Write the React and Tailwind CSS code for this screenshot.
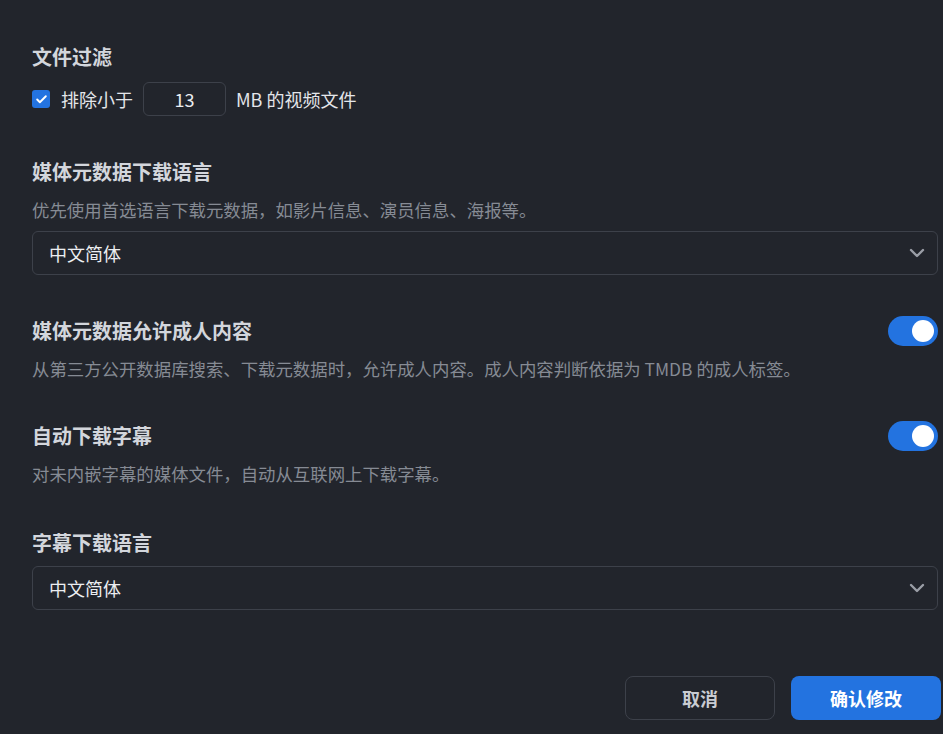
import { ChevronDown, Check } from "lucide-react";

function Toggle({ on }) {
  return (
    <div
      className={`flex h-[30px] w-[50px] shrink-0 items-center rounded-full px-[4px] ${
        on ? "justify-end bg-[#2373e0]" : "justify-start bg-[#3b3f48]"
      }`}
    >
      <div className="h-[22px] w-[22px] rounded-full bg-white" />
    </div>
  );
}

function Select({ value }) {
  return (
    <div className="flex h-[44px] items-center justify-between rounded-md border border-[#3d414a] pl-4 pr-[8px] text-[18px] text-[#eceef1]">
      <span>{value}</span>
      <ChevronDown className="h-6 w-6 text-[#9a9ea6]" strokeWidth={2.4} />
    </div>
  );
}

export default function App() {
  return (
    <div
      className="min-h-[734px] w-full bg-[#22252c] pl-8 pr-[5px] pt-[43px]"
      style={{ fontFamily: '"Noto Sans CJK SC", "Noto Sans", sans-serif' }}
    >
      {/* 文件过滤 */}
      <h3 className="text-[20px] font-bold leading-7 text-[#d3d6dc]">文件过滤</h3>
      <div className="mt-[11px] flex h-[34px] items-center text-[18px] text-[#e4e6ea]">
        <span className="flex h-[18px] w-[18px] items-center justify-center rounded-[3px] bg-[#2373e0]">
          <Check className="h-[13px] w-[13px] text-white" strokeWidth={3.5} />
        </span>
        <span className="ml-[11px]">排除小于</span>
        <div className="ml-[10px] flex h-[34px] w-[83px] items-center justify-center rounded-md border border-[#3d414a] text-[#eceef1]">
          13
        </div>
        <span className="ml-[10px]">MB 的视频文件</span>
      </div>

      {/* 媒体元数据下载语言 */}
      <h3 className="mt-[42px] text-[20px] font-bold leading-7 text-[#d3d6dc]">媒体元数据下载语言</h3>
      <p className="mt-[12px] text-[17.4px] leading-6 text-[#868b94]">
        优先使用首选语言下载元数据，如影片信息、演员信息、海报等。
      </p>
      <div className="mt-[9px]">
        <Select value="中文简体" />
      </div>

      {/* 成人内容 */}
      <div className="mt-[41px] flex h-[30px] items-center justify-between">
        <h3 className="text-[20px] font-bold leading-7 text-[#d3d6dc]">媒体元数据允许成人内容</h3>
        <Toggle on />
      </div>
      <p className="mt-[11px] text-[17.4px] leading-6 text-[#868b94]">
        从第三方公开数据库搜索、下载元数据时，允许成人内容。成人内容判断依据为 TMDB 的成人标签。
      </p>

      {/* 自动下载字幕 */}
      <div className="mt-[40px] flex h-[30px] items-center justify-between">
        <h3 className="text-[20px] font-bold leading-7 text-[#d3d6dc]">自动下载字幕</h3>
        <Toggle on />
      </div>
      <p className="mt-[11px] text-[17.4px] leading-6 text-[#868b94]">
        对未内嵌字幕的媒体文件，自动从互联网上下载字幕。
      </p>

      {/* 字幕下载语言 */}
      <h3 className="mt-[43px] text-[20px] font-bold leading-7 text-[#d3d6dc]">字幕下载语言</h3>
      <div className="mt-[9px]">
        <Select value="中文简体" />
      </div>

      <div className="mt-[66px] flex justify-end gap-4">
        <button className="h-[44px] w-[150px] rounded-lg border border-[#3d414a] text-[18px] font-bold text-[#c9ccd2]">
          取消
        </button>
        <button className="-mr-[3px] h-[44px] w-[150px] rounded-lg bg-[#2373e0] text-[18px] font-bold text-white">
          确认修改
        </button>
      </div>
    </div>
  );
}
